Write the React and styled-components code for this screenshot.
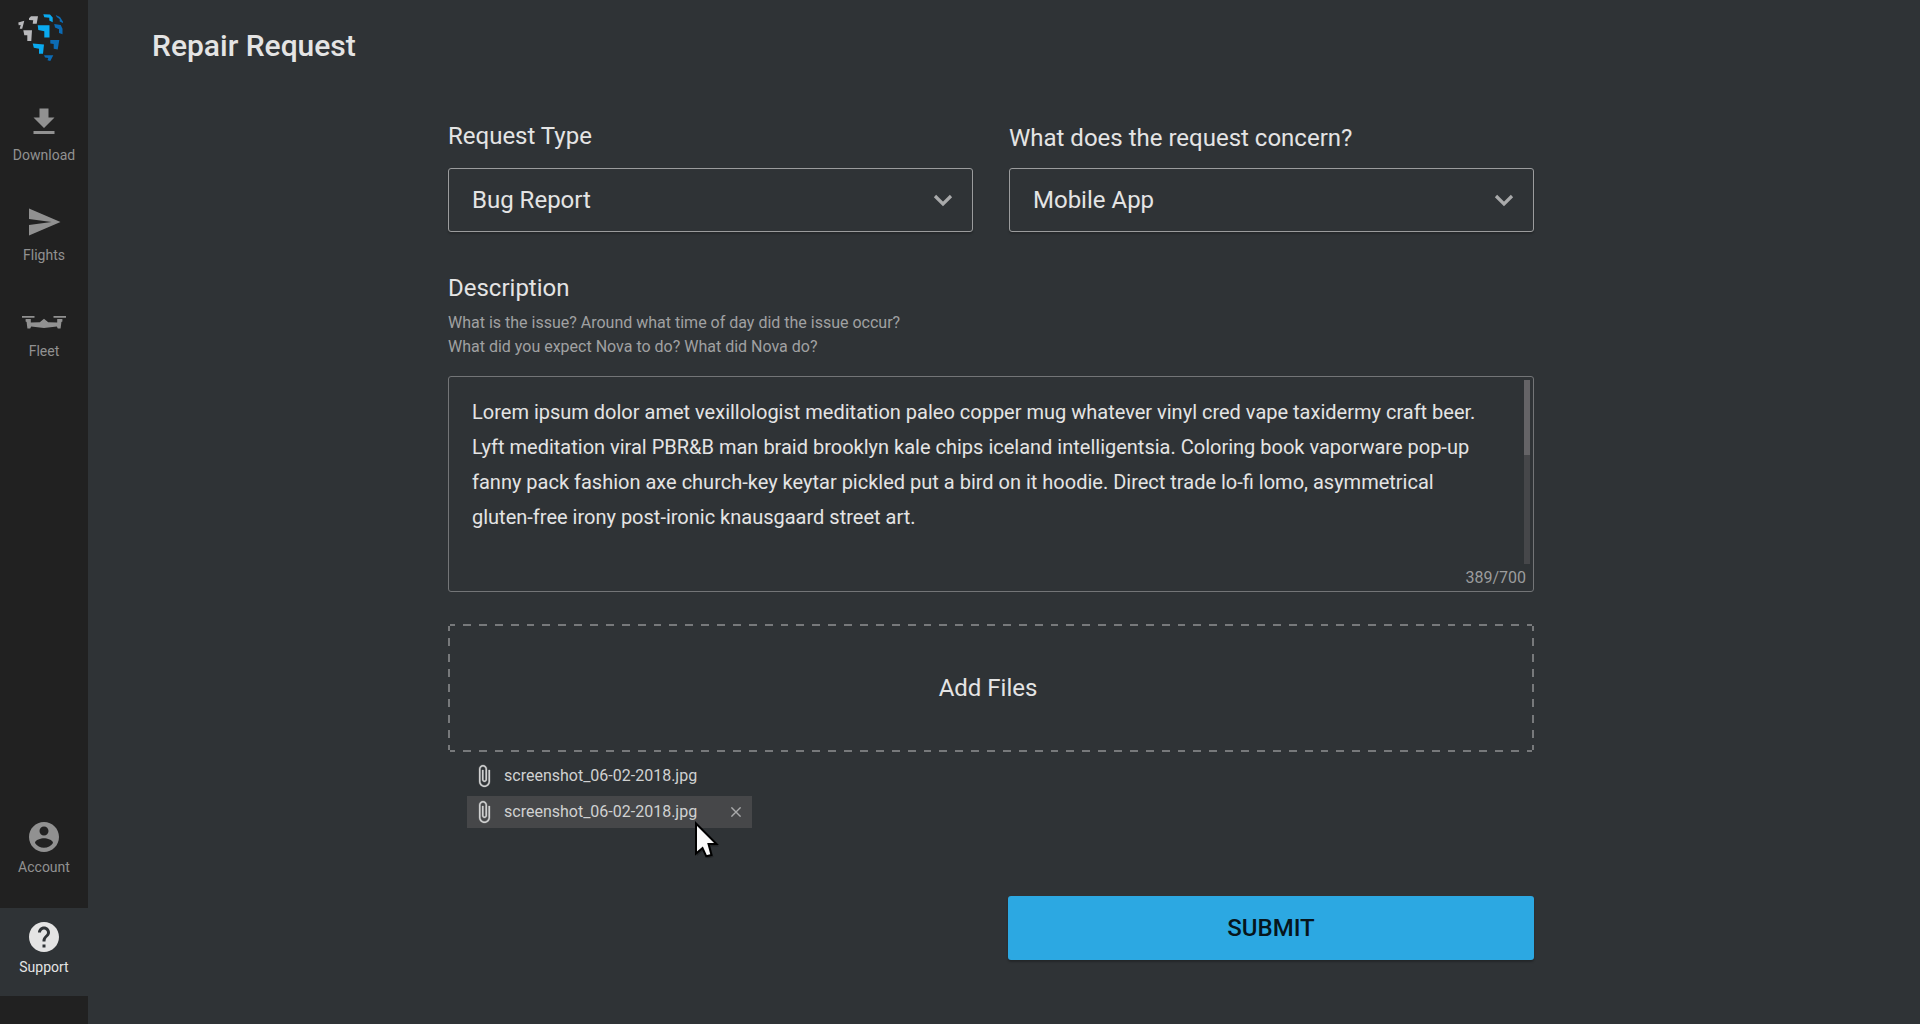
import React from "react";
import styled, { createGlobalStyle } from "styled-components";

const GlobalStyle = createGlobalStyle`
  *, *::before, *::after { box-sizing: border-box; }
  body {
    margin: 0;
    background: #2f3336;
    color: #e4e4e4;
    font-family: Roboto, "Liberation Sans", sans-serif;
  }
`;

const Page = styled.div`
  display: flex;
  width: 1920px;
  height: 1024px;
  overflow: hidden;
  background: #2f3336;
`;

const Sidebar = styled.nav`
  display: flex;
  flex-direction: column;
  width: 88px;
  padding: 12px 0 28px;
  background: #212121;
`;

const Logo = styled.svg`
  display: block;
  width: 48px;
  height: 50px;
  margin: 0 0 31px 17px;
`;

const NavItem = styled.a`
  display: flex;
  flex-direction: column;
  align-items: center;
  height: ${(p) => p.$height || 88}px;
  margin-top: ${(p) => p.$gap || 0}px;
  padding-top: 11px;
  background: ${(p) => (p.$active ? "#2f3336" : "transparent")};
  color: ${(p) => (p.$active ? "#e4e4e4" : "#919191")};
  svg { display: block; flex: none; }
`;

const NavLabel = styled.span`
  margin-top: ${(p) => p.$gap}px;
  font-size: 14px;
  line-height: 16px;
`;

const Spacer = styled.div`
  flex: 1;
`;

const Main = styled.main`
  flex: 1;
  display: flex;
  flex-direction: column;
`;

const Title = styled.h1`
  margin: 0;
  padding: 28px 0 0 64px;
  font-size: 30px;
  line-height: 36px;
  font-weight: 500;
`;

const Form = styled.form`
  width: 1086px;
  margin: 56px 0 0 360px;
`;

const FieldRow = styled.div`
  display: grid;
  grid-template-columns: 525px 525px;
  gap: 36px;
`;

const Field = styled.div`
  display: flex;
  flex-direction: column;
`;

const Label = styled.label`
  height: ${(p) => p.$height || 28}px;
  padding-top: ${(p) => p.$drop || 0}px;
  font-size: 24px;
  line-height: 32px;
`;

const Select = styled.div`
  display: flex;
  align-items: center;
  justify-content: space-between;
  height: 64px;
  padding: 0 19px 0 23px;
  border: 1px solid #9b9c9d;
  border-radius: 3px;
  box-shadow: 0 2px 2px rgba(0, 0, 0, 0.2);
  font-size: 24px;
`;

const Description = styled.section`
  display: flex;
  flex-direction: column;
  margin-top: 40px;
`;

const Hint = styled.p`
  margin: 7px 0 0;
  font-size: 16px;
  line-height: 24px;
  color: #a0a1a2;
`;

const TextBox = styled.div`
  display: flex;
  flex-direction: column;
  height: 216px;
  margin-top: 17px;
  padding: 3px 3px 0 23px;
  border: 1px solid #737577;
  border-radius: 3px;
`;

const TextScroll = styled.div`
  display: flex;
  justify-content: space-between;
  height: 184px;
`;

const TextBody = styled.p`
  margin: 0;
  padding-top: 15px;
  font-size: 20px;
  line-height: 35px;
  white-space: pre;
`;

const ScrollTrack = styled.div`
  width: 6px;
  background: #46474a;
`;

const ScrollThumb = styled.div`
  height: 75px;
  background: #656467;
`;

const Counter = styled.span`
  align-self: flex-end;
  margin: 2px 4px 0 0;
  font-size: 16px;
  line-height: 24px;
  color: #9b9c9d;
`;

const dashX = "repeating-linear-gradient(90deg, #77797b 0 5px, transparent 5px 13px, #77797b 13px 15.88px)";
const dashY = "repeating-linear-gradient(180deg, #77797b 0 5px, transparent 5px 12.4px, #77797b 12.4px 15.25px)";

const DropZone = styled.div`
  display: flex;
  align-items: center;
  justify-content: center;
  height: 128px;
  margin-top: 32px;
  padding-right: 6px;
  font-size: 24px;
  background-image: ${dashX}, ${dashX}, ${dashY}, ${dashY};
  background-size: calc(100% - 4px) 2px, calc(100% - 4px) 2px, 2px calc(100% - 4px), 2px calc(100% - 4px);
  background-position: 2px 0, 2px 100%, 0 2px, 100% 2px;
  background-repeat: no-repeat;
`;

const FileList = styled.div`
  display: flex;
  flex-direction: column;
  gap: 4px;
  margin: 8px 0 0 19px;
`;

const FileRow = styled.div`
  position: relative;
  display: flex;
  align-items: center;
  width: 285px;
  height: 32px;
  padding: 0 11px 0 5px;
  background: ${(p) => (p.$hover ? "#464749" : "transparent")};
  color: #d0d1d1;
`;

const FileName = styled.span`
  flex: 1;
  margin-left: 8px;
  font-size: 16px;
  line-height: 24px;
`;

const Cursor = styled.svg`
  position: absolute;
  left: 226px;
  top: 24px;
  width: 28px;
  height: 40px;
`;

const Submit = styled.button`
  display: block;
  width: 526px;
  height: 64px;
  margin: 68px 0 0 auto;
  padding: 0;
  border: 0;
  border-radius: 3px;
  background: #2ca8e2;
  box-shadow: 0 2px 2px rgba(0, 0, 0, 0.25);
  color: #06151c;
  font: 500 24px Roboto, "Liberation Sans", sans-serif;
`;

const MaterialIcon = ({ d, size = 36, weight = 0 }) => (
  <svg
    width={size}
    height={size}
    viewBox="0 0 24 24"
    fill="currentColor"
    stroke={weight ? "currentColor" : "none"}
    strokeWidth={weight}
  >
    <path d={d} />
  </svg>
);

const icons = {
  download: "M19 9h-4V3H9v6H5l7 7 7-7zM5 18v2h14v-2H5z",
  send: "M2.01 21L23 12 2.01 3 2 10l15 2-15 2z",
  account:
    "M12 2C6.48 2 2 6.48 2 12s4.48 10 10 10 10-4.48 10-10S17.52 2 12 2zm0 3c1.66 0 3 1.34 3 3s-1.34 3-3 3-3-1.34-3-3 1.34-3 3-3zm0 14.2c-2.5 0-4.71-1.28-6-3.22.03-1.99 4-3.08 6-3.08 1.99 0 5.97 1.09 6 3.08-1.29 1.94-3.5 3.22-6 3.22z",
  help:
    "M12 2C6.48 2 2 6.48 2 12s4.48 10 10 10 10-4.48 10-10S17.52 2 12 2zm1 17h-2v-2h2v2zm2.07-7.75l-.9.92C13.45 12.9 13 13.5 13 15h-2v-.5c0-1.1.45-2.1 1.17-2.83l1.24-1.26c.37-.36.59-.86.59-1.41 0-1.1-.9-2-2-2s-2 .9-2 2H8c0-2.21 1.79-4 4-4s4 1.79 4 4c0 .88-.36 1.68-.93 2.25z",
  clip:
    "M16.5 6v11.5c0 2.21-1.79 4-4 4s-4-1.79-4-4V5c0-1.38 1.12-2.5 2.5-2.5s2.5 1.12 2.5 2.5v10.5c0 .55-.45 1-1 1s-1-.45-1-1V6H10v9.5c0 1.38 1.12 2.5 2.5 2.5s2.5-1.12 2.5-2.5V5c0-2.21-1.79-4-4-4S7 2.79 7 5v12.5c0 3.04 2.46 5.5 5.5 5.5s5.5-2.46 5.5-5.5V6h-1.5z",
};

const DroneIcon = () => (
  <svg width="44" height="14" viewBox="0 0 44 14" fill="currentColor">
    <path d="M0 0h12.5v1.8H0zM31.5 0H44v1.8H31.5z" />
    <path d="M3.600 3h5.200v3.400l9 -.1L22 2.700l4.200 3.600 9 .1V3h5.200v2.400l-1 .6-.8 6.400h-2.800L34.800 10.400 22 12 9.200 10.400 8.200 12.400H5.400L4.600 6 3.600 5.400z" />
  </svg>
);

const Chevron = () => (
  <svg width="20" height="14" viewBox="0 0 20 14" fill="none" stroke="#a9aaab" strokeWidth="3.2">
    <path d="M2 3l8 8 8-8" />
  </svg>
);

const CloseIcon = () => (
  <svg width="10" height="10" viewBox="0 0 10 10" fill="none" stroke="#a9aaab" strokeWidth="1.4">
    <path d="M.4.4l9.200 9.200M9.600.4L.4 9.600" />
  </svg>
);

const BrandMark = () => (
  <Logo viewBox="17 12 48 50">
    <g fill="#b9b9bc">
      <path d="M18.300 22.600L24.300 20.700 22.200 28.700H19.700L20.700 25 18.700 25.300z" />
      <path d="M29 18.200L31 16.300H38L36.700 23.700H32.700L33.200 20.200L29 19.900z" />
      <path d="M23.300 30.300H32L31.300 41H27.300V35.300H24.300z" />
    </g>
    <g fill="#0aaaf0">
      <path d="M43.300 14.300L50 14.500 52.700 17.500V22.300L49.300 20.500V17.700L44.300 17.200z" />
      <path d="M37.700 25.200H49.500V37.500H44.300V31.300L38.300 30z" />
      <path d="M32.700 43.500L44 44.500 43 53.800H39V48.800L33.800 47.700z" />
    </g>
    <g fill="#0c6bb4">
      <path d="M55.700 15L60 17 63 21.700V23L59.700 21.500V19.200L56.700 17z" />
      <path d="M54.200 24L60.700 25 62.500 28.700V34.300L59 33V29.300L55 27.500z" />
      <path d="M50.300 40H59.300L57.700 49.500L53.700 48.700V44L50.300 43.500z" />
      <path d="M44 55.300H53.300L50.300 61L47.500 60.200 48.300 58 45 57.500z" />
    </g>
  </Logo>
);

const files = ["screenshot_06-02-2018.jpg", "screenshot_06-02-2018.jpg"];

const body = `Lorem ipsum dolor amet vexillologist meditation paleo copper mug whatever vinyl cred vape taxidermy craft beer.
Lyft meditation viral PBR&B man braid brooklyn kale chips iceland intelligentsia. Coloring book vaporware pop-up
fanny pack fashion axe church-key keytar pickled put a bird on it hoodie. Direct trade lo-fi lomo, asymmetrical
gluten-free irony post-ironic knausgaard street art.`;

export default function App() {
  return (
    <Page>
      <GlobalStyle />
      <Sidebar>
        <BrandMark />
        <NavItem $height={100}>
          <MaterialIcon d={icons.download} />
          <NavLabel $gap={7}>Download</NavLabel>
        </NavItem>
        <NavItem $height={100}>
          <MaterialIcon d={icons.send} />
          <NavLabel $gap={7}>Flights</NavLabel>
        </NavItem>
        <NavItem $gap={12}>
          <DroneIcon />
          <NavLabel $gap={13}>Fleet</NavLabel>
        </NavItem>
        <Spacer />
        <NavItem>
          <MaterialIcon d={icons.account} />
          <NavLabel $gap={4}>Account</NavLabel>
        </NavItem>
        <NavItem $gap={12} $active>
          <MaterialIcon d={icons.help} />
          <NavLabel $gap={4}>Support</NavLabel>
        </NavItem>
      </Sidebar>
      <Main>
        <Title>Repair Request</Title>
        <Form>
          <FieldRow>
            <Field>
              <Label $height={48}>Request Type</Label>
              <Select>
                Bug Report
                <Chevron />
              </Select>
            </Field>
            <Field>
              <Label $height={48} $drop={2}>What does the request concern?</Label>
              <Select>
                Mobile App
                <Chevron />
              </Select>
            </Field>
          </FieldRow>
          <Description>
            <Label $height={32}>Description</Label>
            <Hint>
              What is the issue? Around what time of day did the issue occur?
              <br />
              What did you expect Nova to do? What did Nova do?
            </Hint>
            <TextBox>
              <TextScroll>
                <TextBody>{body}</TextBody>
                <ScrollTrack>
                  <ScrollThumb />
                </ScrollTrack>
              </TextScroll>
              <Counter>389/700</Counter>
            </TextBox>
          </Description>
          <DropZone>Add Files</DropZone>
          <FileList>
            {files.map((name, i) => (
              <FileRow key={i} $hover={i === 1}>
                <MaterialIcon d={icons.clip} size={24} weight={0.3} />
                <FileName>{name}</FileName>
                {i === 1 && (
                  <>
                    <CloseIcon />
                    <Cursor viewBox="0 0 28 40">
                      <path d="M4 5V36L10.500 30.500 14.500 38.500 20.500 37 17.500 26.500H26z" fill="#000" opacity="0.25" />
                      <path d="M3 3.500V33.500L9.500 28 13.300 36.300 18.500 35 15.500 24H23.500z" fill="#fafafa" stroke="#000" strokeWidth="2" />
                    </Cursor>
                  </>
                )}
              </FileRow>
            ))}
          </FileList>
          <Submit type="button">SUBMIT</Submit>
        </Form>
      </Main>
    </Page>
  );
}
